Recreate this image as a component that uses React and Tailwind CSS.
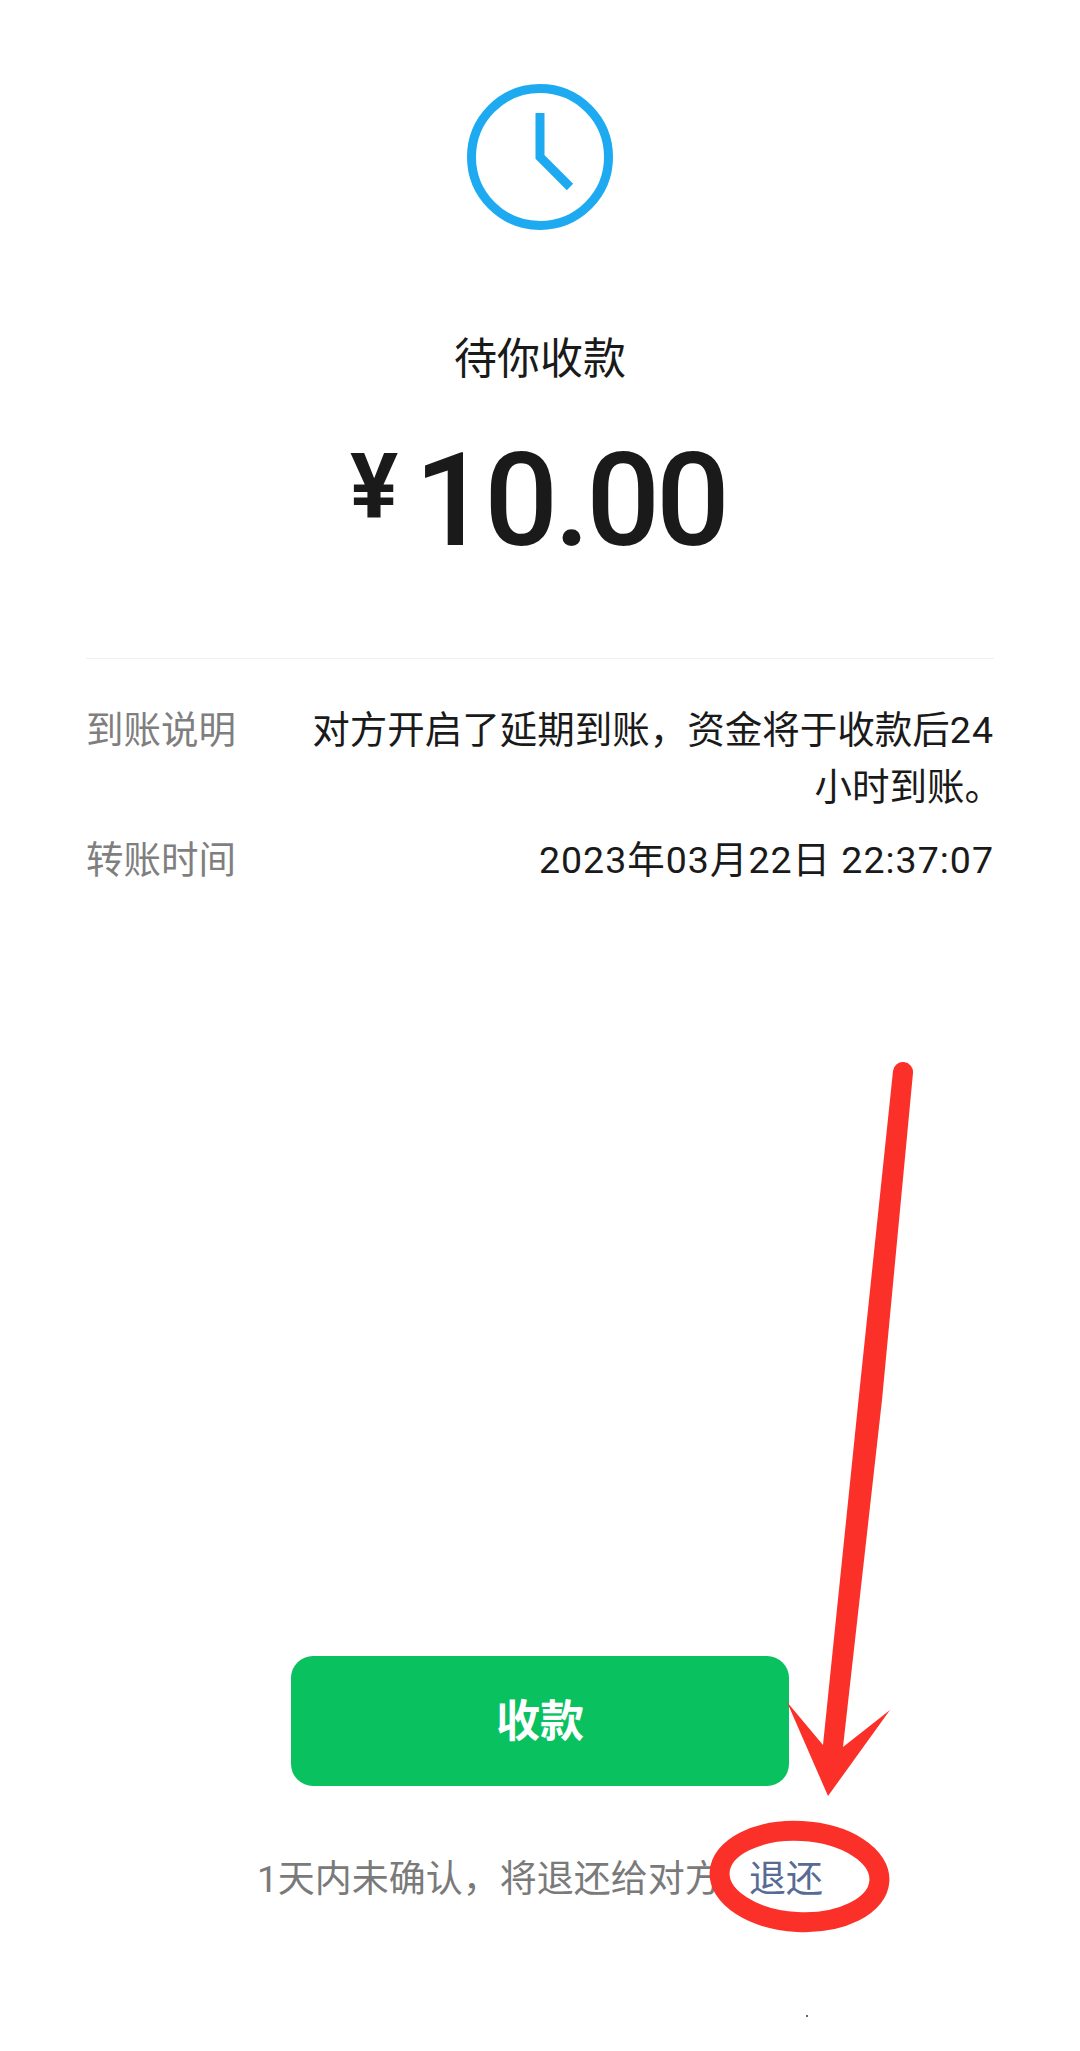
const CJK = "font-['Roboto','Noto_Sans_CJK_SC',sans-serif]";

function ClockIcon() {
  return (
    <svg width="146" height="146" viewBox="0 0 146 146" fill="none" stroke="#1eaaf1">
      <circle cx="73" cy="73" r="68.5" strokeWidth="9" />
      <path d="M73 29V73L103 103" strokeWidth="9" />
    </svg>
  );
}

function Row({ label, children }) {
  return (
    <div className="flex justify-between">
      <div className="shrink-0 text-[37.5px] leading-[57px] text-[#7f7f7f]">{label}</div>
      <div className="w-[690px] text-right text-[37.5px] leading-[57px] text-[#1a1a1a]">{children}</div>
    </div>
  );
}

// hand drawn marks on top of the screenshot
function Annotation() {
  return (
    <svg className="absolute left-0 top-0" width="1080" height="2051" viewBox="0 0 1080 2051" fill="none">
      <path
        d="M893 1071A10 10 0 0 1 913 1073L882 1400L843 1747L890 1710L828 1796L787 1702L823 1745L858.5 1400Z"
        fill="#fb3028"
      />
      <ellipse cx="799.5" cy="1876.5" rx="80" ry="45.5" stroke="#fb3028" strokeWidth="20" transform="rotate(3 799.5 1876.5)" />
      <circle cx="807" cy="2016" r="1" fill="#333" />
    </svg>
  );
}

export default function App() {
  return (
    <main className={`relative mx-auto flex h-[2051px] w-[1080px] flex-col items-center bg-white pt-[84px] ${CJK}`}>
      <ClockIcon />

      <h1 className="mt-[102px] text-[43px] leading-[54px] text-[#1a1a1a]">待你收款</h1>

      <div className="mt-[50px] flex h-[130px] items-center pr-[4px] text-[#1a1a1a]">
        <span className="mr-[16px] mt-[-26px] text-[90px] font-bold leading-none">¥</span>
        <span className="text-[130px] font-medium leading-none tracking-[-4px]">10.00</span>
      </div>

      <div className="mt-[92px] w-[908px] border-t border-[#efefef] pt-[43px]">
        <div className="flex flex-col gap-[16px]">
          <Row label="到账说明">
            对方开启了延期到账，资金将于收款后<span className="tracking-[1px]">24</span>
            <br />
            小时到账<span className="tracking-[-8px]">。</span>
          </Row>
          <Row label="转账时间">
            <span className="tracking-[1px]">2023年03月22日 22:37:07</span>
          </Row>
        </div>
      </div>

      <div className="mt-auto flex h-[130px] w-[498px] items-center justify-center rounded-[22px] bg-[#0ac160] pt-[2px] text-[44px] font-bold text-white">
        收款
      </div>

      <div className="mb-[141px] mt-[64px] flex w-[566px] justify-between text-[37px] leading-[60px]">
        <span className="text-[#7a7a7a]">1天内未确认，将退还给对方</span>
        <span className="text-[#576b95]">退还</span>
      </div>

      <Annotation />
    </main>
  );
}
